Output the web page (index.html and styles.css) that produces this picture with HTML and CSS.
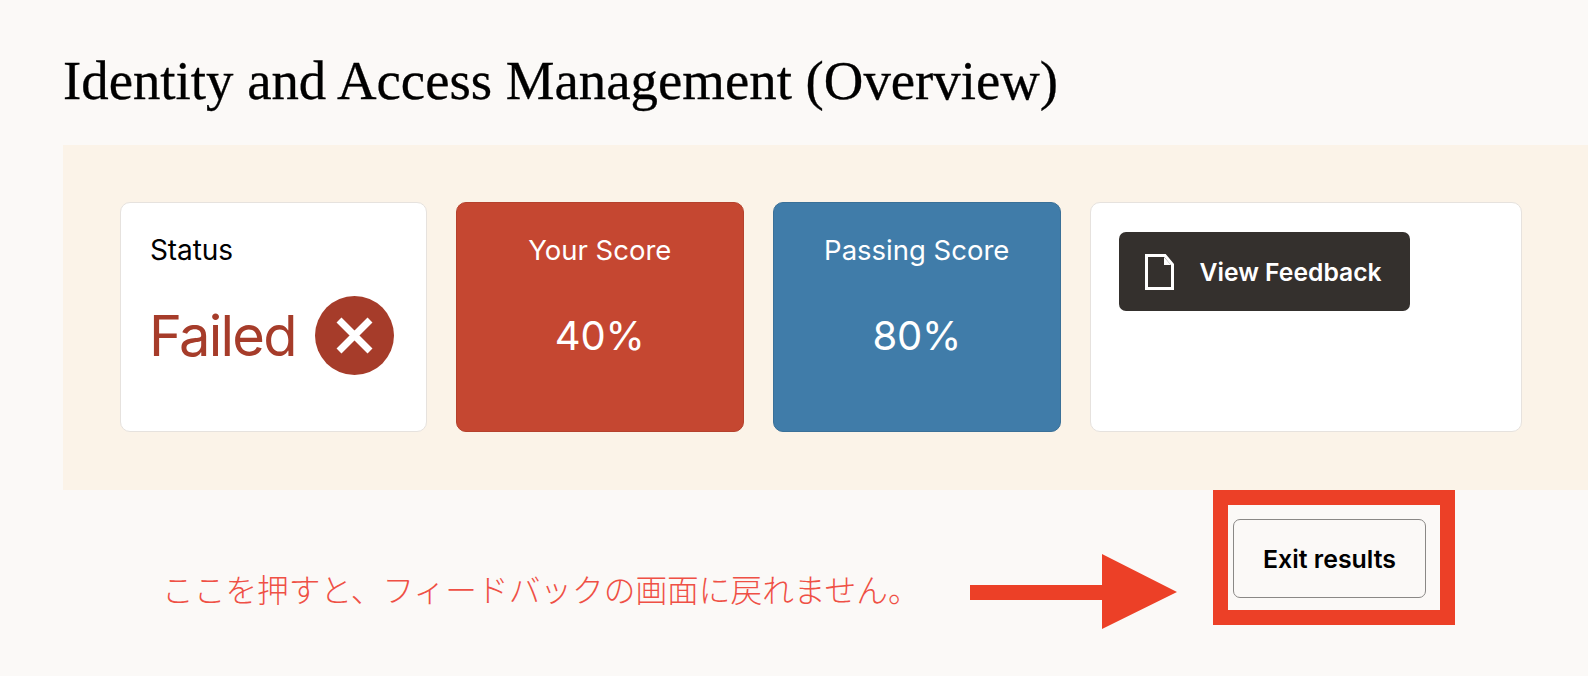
FILE: index.html
```html
<!DOCTYPE html>
<html lang="en">
<head>
<meta charset="utf-8">
<title>Identity and Access Management (Overview)</title>
<link rel="stylesheet" href="styles.css">
</head>
<body>
<div id="page">
	<h1>Identity and Access Management (Overview)</h1>

	<div class="band">
		<div class="card status">
			<p class="status-label">Status</p>
			<div class="status-value">
				<span>Failed</span>
				<svg class="fail-icon" viewBox="0 0 79 79" width="79" height="79">
					<circle cx="39.5" cy="39.5" r="39.5" fill="#a63c2a"/>
					<path d="M24 24L55 55M55 24L24 55" stroke="#fff" stroke-width="7" fill="none"/>
				</svg>
			</div>
		</div>
		<div class="card score red">
			<p>Your Score</p>
			<p class="num">40%</p>
		</div>
		<div class="card score blue">
			<p>Passing Score</p>
			<p class="num">80%</p>
		</div>
		<div class="card feedback">
			<button class="btn-dark">
				<svg viewBox="0 0 29 36" width="29" height="36">
					<path d="M1.5 1.5H20L27.5 10.5V34.5H1.5Z" fill="none" stroke="#fff" stroke-width="3"/>
					<path d="M19 3L26 11H19Z" fill="#fff"/>
				</svg>
				View Feedback
			</button>
		</div>
	</div>

	<div class="bottom">
		<p class="note">ここを押すと、フィードバックの画面に戻れません。</p>
		<svg class="arrow" viewBox="0 0 207 75" width="207" height="75">
			<path d="M0 31H132V0L207 38L132 75V46H0Z" fill="#ec4027"/>
		</svg>
		<div class="redbox">
			<button class="btn-exit">Exit results</button>
		</div>
	</div>
</div>
</body>
</html>
```

FILE: styles.css
```css
body {
	margin: 0;
	background: #fbf9f7;
	font-family: Inter, "Noto Sans CJK JP", sans-serif;
	color: #000;
}

#page {
	padding-left: 63px;
}

h1 {
	margin: 0;
	padding-top: 52px;
	height: 145px;
	box-sizing: border-box;
	font-family: "Liberation Serif", serif;
	font-weight: 400;
	font-size: 54.8px;
	line-height: 58px;
	-webkit-text-stroke: 0.3px #000;
}

p {
	margin: 0;
}

.band {
	display: grid;
	grid-template-columns: 307px 288.5px 288.5px 432px;
	column-gap: 28.5px;
	height: 345px;
	box-sizing: border-box;
	padding: 57px 0 58px 57px;
	background: #fbf3e8;
}

.card {
	box-sizing: border-box;
	border: 1px solid #e6e2de;
	border-radius: 10px;
	background: #fff;
}

.status {
	padding: 32px 29px;
}

.status-label {
	font-size: 28px;
	line-height: 30px;
	letter-spacing: -0.1px;
}

.status-value {
	display: flex;
	align-items: center;
	gap: 19px;
	margin: 31px 0 0 -1px;
	font-size: 56px;
	letter-spacing: -1.75px;
	color: #a63c2a;
}

.score {
	padding-top: 29px;
	text-align: center;
	color: #fff;
	font-size: 27.5px;
	line-height: 36px;
}

.score .num {
	margin-top: 45px;
	font-size: 40px;
	line-height: 46px;
	letter-spacing: -0.2px;
}

.red {
	background: #c54731;
	border-color: #b5412d;
}

.blue {
	background: #407ca9;
	border-color: #3a7098;
}

.feedback {
	padding: 29px 28px;
}

.btn-dark {
	display: flex;
	align-items: center;
	gap: 26px;
	width: 291px;
	height: 79px;
	padding: 0 0 0 26px;
	border: 0;
	border-radius: 7px;
	background: #34302d;
	color: #fff;
	font-family: inherit;
	font-weight: 600;
	font-size: 24.7px;
}

.bottom {
	display: flex;
	align-items: flex-start;
	padding-left: 99px;
}

.note {
	width: 744px;
	margin-top: 83px;
	font-size: 31.7px;
	line-height: 36px;
	font-weight: 300;
	color: #ef5045;
	white-space: nowrap;
}

.arrow {
	margin: 64px 0 0 64px;
}

.redbox {
	box-sizing: border-box;
	width: 242px;
	height: 135px;
	margin-left: 36px;
	padding: 14px 15px 0 5px;
	border: 15px solid #ec4027;
}

.btn-exit {
	display: block;
	width: 193px;
	height: 79px;
	border: 1px solid #8a8886;
	border-radius: 7px;
	background: transparent;
	color: #000;
	font-family: inherit;
	font-weight: 600;
	font-size: 24.9px;
}
```
